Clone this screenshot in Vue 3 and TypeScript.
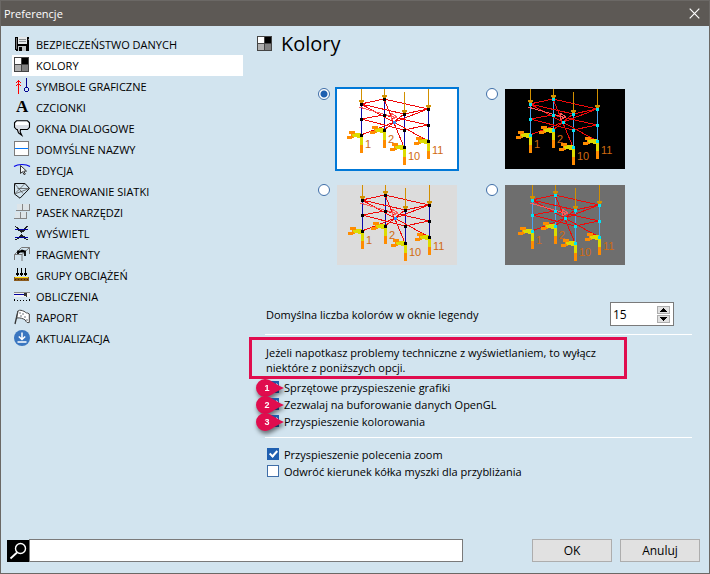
<script setup lang="ts">
import { ref } from 'vue'

interface Category {
  id: string
  label: string
}

interface Scheme {
  id: string
  name: string
  background: string
  node: string
  column: string
  label: string
  accent: string
  shift: number
}

interface Option {
  id: string
  label: string
  checked: boolean
  pin?: number
}

const categories: Category[] = [
  { id: 'save', label: 'BEZPIECZEŃSTWO DANYCH' },
  { id: 'colors', label: 'KOLORY' },
  { id: 'symbols', label: 'SYMBOLE GRAFICZNE' },
  { id: 'fonts', label: 'CZCIONKI' },
  { id: 'dialogs', label: 'OKNA DIALOGOWE' },
  { id: 'names', label: 'DOMYŚLNE NAZWY' },
  { id: 'edit', label: 'EDYCJA' },
  { id: 'mesh', label: 'GENEROWANIE SIATKI' },
  { id: 'toolbar', label: 'PASEK NARZĘDZI' },
  { id: 'display', label: 'WYŚWIETL' },
  { id: 'fragments', label: 'FRAGMENTY' },
  { id: 'loads', label: 'GRUPY OBCIĄŻEŃ' },
  { id: 'calc', label: 'OBLICZENIA' },
  { id: 'report', label: 'RAPORT' },
  { id: 'update', label: 'AKTUALIZACJA' },
]

const schemes: Scheme[] = [
  { id: 'white', name: 'Białe tło', background: '#ffffff', node: '#000000', column: '#0a0aa8', label: '#d06a10', accent: '#3f8cf0', shift: 0 },
  { id: 'black', name: 'Czarne tło', background: '#000000', node: '#00e4f4', column: '#4aa4f0', label: '#d06a10', accent: '#00e4f4', shift: 1 },
  { id: 'light', name: 'Jasnoszare tło', background: '#dcdcdc', node: '#000000', column: '#0a0aa8', label: '#d06a10', accent: '#2d90ff', shift: 1 },
  { id: 'dark', name: 'Ciemnoszare tło', background: '#6e6e6e', node: '#00e4f4', column: '#4aa4f0', label: '#d06a10', accent: '#00e4f4', shift: 3 },
]

const columns = [
  { x: 24, top: 0, nodes: [15, 30, 46], label: '1', lx: 28, ly: 59 },
  { x: 47, top: 0, nodes: [10, 26, 41], label: '2', lx: 51, ly: 54 },
  { x: 67, top: 3, nodes: [25, 41, 58], label: '10', lx: 71, ly: 71 },
  { x: 91, top: 0, nodes: [20, 36, 52], label: '11', lx: 95, ly: 65 },
]

const beams =
  'M24 15L47 10L91 20L67 25ZM24 30L47 26L91 36L67 41ZM24 15L91 52M24 46L91 20M47 10L67 58M47 41L67 25'

const active = ref('colors')
const scheme = ref('white')
const colorCount = ref(15)
const query = ref('')

const technical = ref<Option[]>([
  { id: 'hw', label: 'Sprzętowe przyspieszenie grafiki', checked: true, pin: 1 },
  { id: 'buffer', label: 'Zezwalaj na buforowanie danych OpenGL', checked: true, pin: 2 },
  { id: 'fill', label: 'Przyspieszenie kolorowania', checked: true, pin: 3 },
])

const zooming = ref<Option[]>([
  { id: 'zoom', label: 'Przyspieszenie polecenia zoom', checked: true },
  { id: 'wheel', label: 'Odwróć kierunek kółka myszki dla przybliżania', checked: false },
])
</script>

<template>
  <div class="window">
    <header class="titlebar">
      <span>Preferencje</span>
      <button class="close" type="button" aria-label="Zamknij">
        <svg width="11" height="11" viewBox="0 0 11 11"><path d="M.7 .7L10.3 10.3M10.3 .7L.7 10.3" stroke="#fff" stroke-width="1.2" /></svg>
      </button>
    </header>

    <div class="body">
      <nav class="sidebar">
        <button
          v-for="item in categories"
          :key="item.id"
          type="button"
          class="category"
          :class="{ active: active === item.id }"
          @click="active = item.id"
        >
          <svg class="icon" width="17" height="17" viewBox="0 0 17 17" fill="none" aria-hidden="true">
            <g v-if="item.id === 'save'" shape-rendering="crispEdges">
              <path d="M1 1h14v14H2l-1-1z" fill="#000" />
              <path d="M4 1h9v7H4z" fill="#e4e8ea" />
              <path d="M5 3h7v1H5zM5 5h7v1H5z" fill="#8a8f92" />
              <path d="M2 2h1v11H2zM14 3h1v1h-1z" fill="#777" />
              <path d="M4 10h8v5H4z" fill="#bfc4c6" />
              <path d="M5 11h3v4H5z" fill="#000" />
            </g>
            <g v-else-if="item.id === 'colors'" shape-rendering="crispEdges">
              <path d="M0 0h15v15H0z" fill="#454545" />
              <path d="M1 1h6v6H1z" fill="#fff" />
              <path d="M8 1h6v6H8z" fill="#000" />
              <path d="M1 8h6v6H1z" fill="#b0b0b0" />
              <path d="M8 8h6v6H8z" fill="#808080" />
            </g>
            <g v-else-if="item.id === 'symbols'" shape-rendering="crispEdges">
              <path d="M4 2h1v14H4zM3 3h3v1H3zM2 4h1v1H2zM6 4h1v1H6zM3 6h3v1H3zM2 7h1v1H2zM6 7h1v1H6z" fill="#f00" />
              <path d="M12 0h1v9h-1zM11 9h3v1h-3zM10 10h1v3h-1zM14 10h1v3h-1zM11 13h3v1h-3z" fill="#000090" />
            </g>
            <text v-else-if="item.id === 'fonts'" x="2" y="13" class="glyph">A</text>
            <g v-else-if="item.id === 'dialogs'">
              <path d="M2.5 .8h11l2 2v4.500l-2 2.200H6.500L6.200 12l1.600 3.300L4.500 13 3.300 9.500H2.500L.5 7.300V2.800z" fill="#d9dde4" stroke="#000" stroke-width="1.1" />
              <path d="M2.800 1.800h10.400l1 1V5H1.700V2.800z" fill="#fff" />
            </g>
            <g v-else-if="item.id === 'names'" shape-rendering="crispEdges">
              <path d="M0 0h15v15H0z" fill="#7c7c7c" />
              <path d="M1 1h13v13H1z" fill="#fff" />
              <path d="M1 7h13v1H1z" fill="#0078ff" />
            </g>
            <g v-else-if="item.id === 'edit'">
              <path d="M0 4.500C4 1.800 12 1.800 16 4.500" stroke="#0000e8" stroke-width="1.2" />
              <path d="M6.500 3.500v8l2-1.800 1.600 3 1.200-.6-1.500-3h2.700z" fill="#f4f7f9" stroke="#333" />
            </g>
            <g v-else-if="item.id === 'mesh'" stroke="#111">
              <path d="M.5 .5h10.500L15.500 5.500 6 15.200.5 11z" />
              <path d="M.5 .5L9 10.500M11 .5L.5 11M15.500 5.500H3.500M15.500 5.500L.5 11" stroke="#555" stroke-width=".8" />
            </g>
            <g v-else-if="item.id === 'toolbar'" shape-rendering="crispEdges">
              <path d="M3 0h5v6H3zM9 0h6v6H9zM1 8h5v6H1zM7 8h5v6H7z" fill="#dde4e8" />
              <path d="M2 6h14v1H2zM8 0h1v7H8zM15 0h1v7h-1zM0 14h13v1H0zM6 8h1v7H6zM12 8h1v7h-1z" fill="#858585" />
            </g>
            <g v-else-if="item.id === 'display'" shape-rendering="crispEdges">
              <path d="M1 1h1v1H1zM2 2h2v1H2zM3 3h2v1H3zM12 1h2v1h-2zM11 2h2v1h-2zM10 3h2v1h-2zM4 5h7v1H4zM6 6h4v1H6zM7 7h1v1H7zM7 9h1v1H7zM6 10h3v1H6zM5 11h6v1H5zM3 13h2v1H3zM10 13h2v1h-2zM1 14h2v1H1zM12 14h2v1h-2z" fill="#222" />
              <path d="M1 4h13v1H1zM1 12h13v1H1z" fill="#0000a0" />
            </g>
            <g v-else-if="item.id === 'fragments'">
              <path d="M.5 14V8.500h7.500V15M.5 8.500L7.500 1.500H15.500V8M8 8.500L15.500 1.500" stroke="#777" />
              <path d="M4 8V5.500h7V10M4.500 6.500L8 4.500l3.500 1" stroke="#000" stroke-width="1.8" />
            </g>
            <g v-else-if="item.id === 'loads'" shape-rendering="crispEdges">
              <path d="M3 1h1v8H3zM2 6h3v2H2zM7 1h1v8H7zM6 6h3v2H6zM11 1h1v8h-1zM10 6h3v2h-3z" fill="#000" />
              <path d="M0 10h15v4H0z" fill="#8a5a1e" />
              <path d="M1 10h13v1H1z" fill="#ffd400" />
              <path d="M1 12h1v1H1zM4 12h1v1H4zM7 12h1v1H7zM10 12h1v1h-1zM13 12h1v1h-1z" fill="#4a2b00" />
            </g>
            <g v-else-if="item.id === 'calc'" shape-rendering="crispEdges">
              <path d="M0 4h16v1H0z" fill="#888" />
              <path d="M0 5h16v4H0z" fill="#f2f2f2" />
              <path d="M0 6h10v1H0z" fill="#0000a0" />
              <path d="M10 5h3v4h-1V8h-2z" fill="#333" />
              <path d="M0 11h1v2H0zM3 12h1v1H3zM6 12h1v1H6zM9 12h1v1H9zM12 12h1v1h-1zM15 11h1v2h-1z" fill="#000" />
            </g>
            <g v-else-if="item.id === 'report'">
              <path d="M1 15L4 2" stroke="#333" stroke-width="1.300" />
              <path d="M4 2c2-1.500 4-.5 6 .3 1.500.7 2 2 3.500 1.700l1.800 1v8.500c-2 .6-3.300-.5-4-2.500C9 9.500 6 8.500 2.800 9z" fill="#fff" stroke="#444" />
              <path d="M5 3h2v2H5zM8 4h2v2H8zM6 6h2v2H6zM10 7h2v2h-2zM12 10h2v2h-2z" fill="#b8bcc0" />
            </g>
            <g v-else>
              <circle cx="8" cy="8" r="8" fill="#3a76c0" />
              <path d="M8 2.500v7M4.800 6.500L8 9.500l3.200-3M3.500 12h9" stroke="#fff" stroke-width="1.500" />
            </g>
          </svg>
          <span>{{ item.label }}</span>
        </button>
      </nav>

      <main class="content">
        <h1 class="heading">
          <svg width="15" height="15" viewBox="0 0 15 15" shape-rendering="crispEdges" aria-hidden="true">
            <path d="M0 0h15v15H0z" fill="#454545" />
            <path d="M1 1h6v6H1z" fill="#fff" />
            <path d="M8 1h6v6H8z" fill="#000" />
            <path d="M1 8h6v6H1z" fill="#b0b0b0" />
            <path d="M8 8h6v6H8z" fill="#808080" />
          </svg>
          <span>Kolory</span>
        </h1>

        <div class="schemes" role="radiogroup" aria-label="Kolory">
          <label v-for="s in schemes" :key="s.id" class="scheme">
            <input v-model="scheme" type="radio" name="scheme" :value="s.id" :aria-label="s.name" />
            <svg class="thumb" :class="{ chosen: scheme === s.id }" width="120" height="80" viewBox="0 0 120 80" shape-rendering="crispEdges">
              <rect width="120" height="80" :fill="s.background" />
              <g :transform="`translate(${s.shift} 0)`">
                <path v-for="c in columns" :key="c.label" :d="`M${c.x + 0.5} ${c.nodes[0]}V${c.nodes[2]}`" :stroke="s.column" />
                <path :d="beams" fill="none" stroke="#f00808" />
                <path d="M22 18L60 29M54 24v7M54 24l6 4-6 3" fill="none" stroke="#ff5a5a" />
                <g v-for="c in columns" :key="c.label">
                  <path :d="`M${c.x + 0.5} ${c.top}V${c.nodes[0]}`" stroke="#d29000" />
                  <path :d="`M${c.x - 2} ${c.nodes[0] - 4}h5v2h-1v2h-3v-2h-1z`" fill="#d29000" />
                  <g :transform="`translate(${c.x} ${c.nodes[2]})`">
                    <path d="M-12 -4h6v2h3v3h-4v2h-2v1h-5v-3h4v-2h-2z" fill="#ff8c00" />
                    <path d="M-9 -1h3v-1h6v2h2v10h-3v-7h-3v-1h-4v-1h-1z" fill="#dddc00" />
                    <path d="M-1 10h3v8h-3z" fill="#ff8c00" />
                  </g>
                  <rect v-for="n in c.nodes" :key="n" :x="c.x - 1" :y="n - 1" width="3" height="3" :fill="s.node" />
                  <text :x="c.lx" :y="c.ly" :fill="s.label" class="node-label">{{ c.label }}</text>
                </g>
                <rect x="56" y="32" width="3" height="3" :fill="s.accent" />
              </g>
            </svg>
          </label>
        </div>

        <div class="count">
          <label for="color-count">Domyślna liczba kolorów w oknie legendy</label>
          <div class="spin">
            <input id="color-count" v-model.number="colorCount" type="text" inputmode="numeric" />
            <div class="arrows">
              <button type="button" aria-label="Więcej" @click="colorCount++">
                <svg width="7" height="4" viewBox="0 0 7 4" shape-rendering="crispEdges"><path d="M3 0h1v1h1v1h1v1h1v1H0V3h1V2h1V1h1z" /></svg>
              </button>
              <button type="button" aria-label="Mniej" @click="colorCount--">
                <svg width="7" height="4" viewBox="0 0 7 4" shape-rendering="crispEdges"><path d="M3 4h1V3h1V2h1V1h1V0H0v1h1v1h1v1h1z" /></svg>
              </button>
            </div>
          </div>
        </div>

        <hr />
        <p class="notice">Jeżeli napotkasz problemy techniczne z wyświetlaniem, to wyłącz niektóre z poniższych opcji.</p>

        <div class="options">
          <label v-for="o in technical" :key="o.id" class="option">
            <input v-model="o.checked" type="checkbox" />
            <span>{{ o.label }}</span>
            <svg class="pin" width="36" height="28" viewBox="0 0 36 28" aria-hidden="true">
              <path d="M12 4C17 4 20 8 31 13C20 18 17 22 12 22A9 9 0 0 1 12 4z" fill="#e00d4e" />
              <text x="14" y="16" text-anchor="middle" class="pin-number">{{ o.pin }}</text>
            </svg>
          </label>
        </div>

        <hr />

        <div class="options last">
          <label v-for="o in zooming" :key="o.id" class="option">
            <input v-model="o.checked" type="checkbox" />
            <span>{{ o.label }}</span>
          </label>
        </div>
      </main>
    </div>

    <footer class="footer">
      <label class="search-icon" for="search" aria-label="Szukaj">
        <svg width="22" height="22" viewBox="0 0 22 22" fill="none" stroke="#fff">
          <circle cx="13.500" cy="8.500" r="5" stroke-width="1.400" />
          <path d="M10 12.500L3.500 18.500" stroke-width="1.800" />
        </svg>
      </label>
      <input id="search" v-model="query" class="search" type="text" />
      <div class="actions">
        <button type="button">OK</button>
        <button type="button">Anuluj</button>
      </div>
    </footer>
  </div>
</template>

<style>
body {
  margin: 0;
}
</style>

<style scoped>
.window {
  box-sizing: border-box;
  min-height: 100vh;
  display: flex;
  flex-direction: column;
  border: 1px solid #6b6865;
  background: #d2e4ef;
  color: #000;
  font: 11px/15px "Open Sans", "Noto Sans", sans-serif;
}

button,
input {
  font: inherit;
  color: inherit;
}

.titlebar {
  display: flex;
  align-items: center;
  justify-content: space-between;
  height: 25px;
  padding: 0 9px 0 3px;
  background: #5d5955;
  color: #fff;
}

.close {
  display: flex;
  padding: 0;
  border: 0;
  background: none;
}

.body {
  display: grid;
  grid-template-columns: 231px minmax(0, 1fr);
  column-gap: 6px;
  padding: 0 17px 0 11px;
}

.sidebar {
  padding-top: 8px;
}

.category {
  display: flex;
  align-items: center;
  gap: 5px;
  width: 100%;
  height: 21px;
  padding: 0 2px;
  border: 0;
  background: none;
  text-align: left;
  white-space: nowrap;
}

.category.active {
  background: #fff;
}

.icon {
  flex: none;
  overflow: visible;
}

.glyph {
  font: bold 17px/17px "Liberation Serif", serif;
  fill: #000;
}

.heading {
  display: flex;
  align-items: center;
  gap: 9px;
  height: 34px;
  margin: 0 0 27px;
  padding-left: 8px;
  font-size: 20px;
  font-weight: 400;
}

.schemes {
  display: grid;
  grid-template-columns: max-content max-content;
  gap: 12px 27px;
  padding-left: 69px;
}

.scheme {
  display: flex;
  align-items: flex-start;
  gap: 5px;
}

.thumb {
  border: 2px solid transparent;
}

.thumb.chosen {
  border-color: #0078d7;
}

.node-label {
  font: 11px "Liberation Sans", sans-serif;
}

input[type="radio"],
input[type="checkbox"] {
  appearance: none;
  box-sizing: border-box;
  flex: none;
  width: 12px;
  height: 12px;
  margin: 1px 0 0;
  border: 1px solid #3f6ea8;
  background: #fff;
}

input[type="radio"] {
  border-radius: 50%;
}

input[type="radio"]:checked {
  background: radial-gradient(circle, #1f5fb0 3px, #fff 4px);
}

input[type="checkbox"] {
  margin-top: 2px;
}

input[type="checkbox"]:checked {
  position: relative;
  border-color: #1f5fb0;
  background: #1f5fb0;
}

input[type="checkbox"]:checked::after {
  content: "";
  position: absolute;
  left: 3px;
  top: 0;
  width: 3px;
  height: 6px;
  border: solid #fff;
  border-width: 0 2px 2px 0;
  transform: rotate(42deg);
}

.count {
  display: flex;
  align-items: center;
  justify-content: space-between;
  margin: 35px 18px 8px 17px;
}

.spin {
  box-sizing: border-box;
  display: flex;
  align-items: center;
  width: 64px;
  height: 24px;
  padding-right: 3px;
  border: 1px solid #7a7a7a;
  background: #fff;
}

.spin input {
  flex: 1;
  min-width: 0;
  padding: 0 2px;
  border: 0;
  outline: 0;
  background: none;
  font-size: 12px;
}

.arrows {
  display: grid;
  gap: 1px;
}

.arrows button {
  display: grid;
  place-items: center;
  box-sizing: border-box;
  width: 13px;
  height: 8px;
  padding: 0;
  border: 1px solid #adadad;
  background: #e1e1e1;
}

hr {
  height: 1px;
  margin: 0 0 0 16px;
  border: 0;
  background: #fff;
}

.notice {
  margin: 2px 65px 0 0;
  padding: 5px 8px 1px 14px;
  border: 3px solid #e00d4e;
}

.options {
  padding: 0 0 7px 18px;
}

.options.last {
  padding-top: 8px;
}

.option {
  position: relative;
  display: flex;
  align-items: flex-start;
  gap: 5px;
  height: 17px;
  line-height: 17px;
}

.pin {
  position: absolute;
  left: -14px;
  top: -4px;
  filter: drop-shadow(1px 3px 2px rgba(0, 0, 0, 0.5));
}

.pin-number {
  font: bold 9px "Liberation Sans", sans-serif;
  fill: #fff;
}

.footer {
  display: flex;
  align-items: center;
  margin-top: auto;
  padding: 0 9px 11px 6px;
}

.search-icon {
  display: flex;
  background: #000;
}

.search {
  box-sizing: border-box;
  flex: 1;
  min-width: 0;
  height: 23px;
  padding: 0 4px;
  border: 1px solid #7a7a7a;
  outline: 0;
  background: #fff;
}

.actions {
  display: flex;
  gap: 8px;
  margin-left: 69px;
}

.actions button {
  box-sizing: border-box;
  width: 80px;
  height: 23px;
  padding: 0;
  border: 1px solid #adadad;
  background: #e1e1e1;
  font-size: 12px;
}
</style>
